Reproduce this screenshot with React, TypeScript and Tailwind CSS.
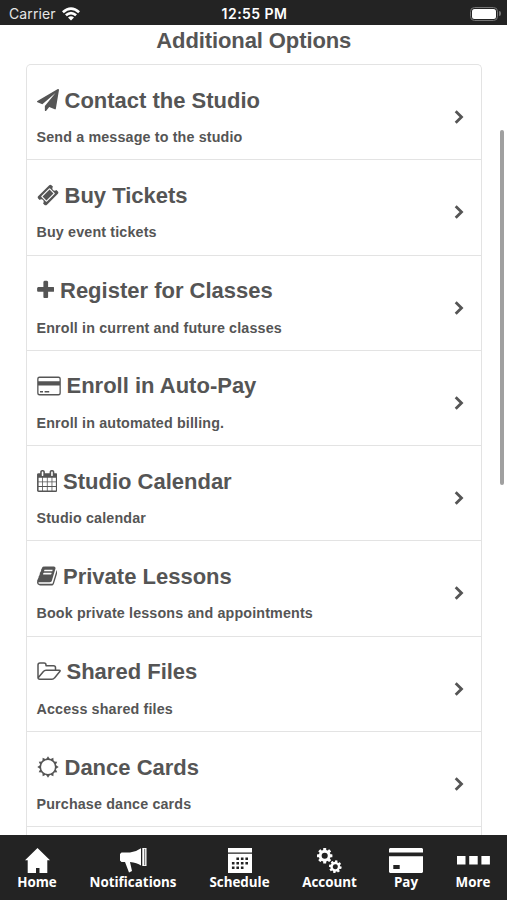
import type { ReactNode } from "react";

const PaperPlane = () => (
  <svg viewBox="0 0 1792 1792" className="block size-[22px] shrink-0 fill-current">
    <path d="M1764 11q33 24 27 64l-256 1536q-5 29-32 45-14 8-31 8-11 0-24-5l-453-185-242 295q-18 23-49 23-13 0-22-4-19-7-30.5-23.5t-11.500-36.500v-349l864-1059-1069 925-395-162q-37-14-40-55-2-40 32-59l1664-960q15-9 32-9 20 0 36 11z" />
  </svg>
);
const Ticket = () => (
  <svg viewBox="0 0 1792 1792" className="block size-[22px] shrink-0 fill-current">
    <path d="M1024 452l316 316-572 572-316-316zm-211 979l618-618q19-19 19-45t-19-45l-362-362q-18-18-45-18t-45 18l-618 618q-19 19-19 45t19 45l362 362q18 18 45 18t45-18zm889-637l-907 908q-37 37-90.500 37t-90.500-37l-126-125q56-56 56-136t-56-136-136-56-136 56l-125-126q-37-37-37-90.500t37-90.500l907-906q37-37 90.500-37t90.500 37l125 125q-56 56-56 136t56 136 136 56 136-56l126 125q37 37 37 90.500t-37 90.500z" />
  </svg>
);
const Plus = () => (
  <svg viewBox="192 64 1408 1792" className="block h-[22px] w-[17.500px] shrink-0 fill-current">
    <path d="M1600 736v192q0 40-28 68t-68 28h-416v416q0 40-28 68t-68 28h-192q-40 0-68-28t-28-68v-416h-416q-40 0-68-28t-28-68v-192q0-40 28-68t68-28h416v-416q0-40 28-68t68-28h192q40 0 68 28t28 68v416h416q40 0 68 28t28 68z" />
  </svg>
);
const Card = () => (
  <svg viewBox="0 0 24 22" className="block h-[22px] w-6 shrink-0 fill-current">
    <path fillRule="evenodd" d="M2.500 1.500h19a2.300 2.300 0 0 1 2.300 2.300v14.400a2.300 2.300 0 0 1-2.300 2.300h-19A2.300 2.300 0 0 1 .2 18.200V3.800A2.300 2.300 0 0 1 2.500 1.500zm0 1.400a1 1 0 0 0-1 1v2.300h21V3.900a1 1 0 0 0-1-1zm-1 7.500v7.700a1 1 0 0 0 1 1h19a1 1 0 0 0 1-1v-7.700zM3 16h3v1.500H3zm4.600 0h4.600v1.500H7.600z" />
  </svg>
);
const Calendar = () => (
  <svg viewBox="64 0 1664 1792" className="block h-[22px] w-[20.500px] shrink-0 fill-current">
    <path d="M192 1664h288v-288h-288v288zm352 0h320v-288h-320v288zm-352-352h288v-320h-288v320zm352 0h320v-320h-320v320zm-352-384h288v-288h-288v288zm736 736h320v-288h-320v288zm-384-736h320v-288h-320v288zm768 736h288v-288h-288v288zm-384-352h320v-320h-320v320zm-352-864v-288q0-13-9.500-22.500t-22.500-9.500h-64q-13 0-22.500 9.500t-9.500 22.500v288q0 13 9.500 22.500t22.500 9.500h64q13 0 22.500-9.500t9.500-22.500zm736 864h288v-320h-288v320zm-384-384h320v-288h-320v288zm384 0h288v-288h-288v288zm32-480v-288q0-13-9.500-22.500t-22.500-9.500h-64q-13 0-22.500 9.500t-9.500 22.500v288q0 13 9.500 22.500t22.500 9.500h64q13 0 22.500-9.500t9.500-22.500zm384-64v1280q0 52-38 90t-90 38h-1408q-52 0-90-38t-38-90v-1280q0-52 38-90t90-38h128v-96q0-66 47-113t113-47h64q66 0 113 47t47 113v96h384v-96q0-66 47-113t113-47h64q66 0 113 47t47 113v96h128q52 0 90 38t38 90z" />
  </svg>
);
const Book = () => (
  <svg viewBox="64 0 1664 1792" className="block h-[22px] w-[20.500px] shrink-0 fill-current">
    <path d="M1703 478q40 57 18 129l-275 906q-19 64-76.500 107.500t-122.500 43.500h-923q-77 0-148.500-53.500t-99.500-131.500q-24-67-2-127 0-4 3-27t4-37q1-8-3-21.500t-3-19.500q2-11 8-21t16.500-23.500 16.500-23.500q23-38 45-91.500t30-91.500q3-10 .5-30t-.5-28q3-11 17-28t17-23q21-36 42-92t25-90q1-9-2.500-32t.5-28q4-13 22-30.500t22-22.500q19-26 42.500-84.500t27.500-96.500q1-8-3-25.500t-2-26.500q2-8 9-18t18-23 17-21q8-12 16.500-30.500t15-35 16-36 19.500-32 26.500-23.500 36-11.500 47.500 5.500l-1 3q38-9 51-9h761q74 0 114 56t18 130l-274 906q-36 119-71.500 153.500t-128.500 34.500h-869q-27 0-38 15-11 16-1 43 24 70 144 70h923q29 0 56-15.500t35-41.500l300-987q7-22 5-57 38 15 59 43zm-1064 2q-4 13 2 22.500t20 9.500h608q13 0 25.500-9.500t16.500-22.500l21-64q4-13-2-22.500t-20-9.500h-608q-13 0-25.500 9.500t-16.500 22.500zm-83 256q-4 13 2 22.500t20 9.500h608q13 0 25.500-9.500t16.500-22.500l21-64q4-13-2-22.500t-20-9.500h-608q-13 0-25.500 9.500t-16.500 22.500z" />
  </svg>
);
const FolderOpen = () => (
  <svg viewBox="0 0 24 22" className="block h-[22px] w-6 shrink-0 fill-none stroke-current" strokeWidth="1.500" strokeLinejoin="round">
    <path d="M1 17V4a2 2 0 0 1 2-2h4a2 2 0 0 1 2 2v.8h7.500a2 2 0 0 1 2 2v2.400M1 17l5.200-6.300q1.200-1.400 2.800-1.400h13.200q1.500 0 .6 1.300l-5.300 6.300q-1 1.300-2.500 1.300H2.800Q1 18.200 1 16.500" />
  </svg>
);
const rays = Array.from({ length: 12 }, (_, i) => i * 30);
const Sun = () => (
  <svg viewBox="-11 -11 22 22" className="block size-[22px] shrink-0 fill-current">
    <circle r="7.700" fill="none" stroke="currentColor" strokeWidth="1.500" />
    {rays.map((a) => (
      <path key={a} d="M-2-7.700L0-10.700L2-7.700z" transform={`rotate(${a})`} />
    ))}
  </svg>
);

type Option = { icon: ReactNode; title: string; detail: string };
const options: Option[] = [
  { icon: <PaperPlane />, title: "Contact the Studio", detail: "Send a message to the studio" },
  { icon: <Ticket />, title: "Buy Tickets", detail: "Buy event tickets" },
  { icon: <Plus />, title: "Register for Classes", detail: "Enroll in current and future classes" },
  { icon: <Card />, title: "Enroll in Auto-Pay", detail: "Enroll in automated billing." },
  { icon: <Calendar />, title: "Studio Calendar", detail: "Studio calendar" },
  { icon: <Book />, title: "Private Lessons", detail: "Book private lessons and appointments" },
  { icon: <FolderOpen />, title: "Shared Files", detail: "Access shared files" },
  { icon: <Sun />, title: "Dance Cards", detail: "Purchase dance cards" },
];

function Row({ icon, title, detail }: Option) {
  return (
    <li className="flex h-[95.300px] shrink-0 items-start justify-between border-b-[1.500px] border-[#e3e3e3] pr-[17px] pl-[10px]">
      <div className="pt-5">
        <h2 className="flex h-[30px] items-center gap-[6px] text-[22px] leading-[30px] font-bold whitespace-nowrap">
          {icon}
          <span className="pt-px">{title}</span>
        </h2>
        <p className="mt-[12px] text-[14.300px] leading-5 font-bold tracking-[0.150px] whitespace-nowrap">{detail}</p>
      </div>
      <svg viewBox="0 0 10 16" className="mt-[44px] h-4 w-[10px] fill-none stroke-current" strokeWidth="2.800">
        <path d="M1.700 2.300L7.500 8L1.700 13.700" />
      </svg>
    </li>
  );
}

const Home = () => (
  <svg viewBox="0 0 25 25" className="block size-[25px] fill-current">
    <path d="M12.500 0L25 12.300H22.300V25H14.500V20H11V25H2.700V12.300H0z" />
  </svg>
);
const Megaphone = () => (
  <svg viewBox="0 0 27 25" className="block h-[25px] w-[27px] fill-current">
    <path d="M1.500 4.500H10Q16 4 21 .3V17.500Q17 14.500 10 14L12 23L9 24.500L5 14H1.500L0 12.500V6zM22.300 0H26.500V18H22.300z" />
    <path d="M24.700 .8V17.200" stroke="#232323" strokeWidth=".7" />
  </svg>
);
const Schedule = () => (
  <svg viewBox="0 0 24 25" className="block h-[25px] w-6 fill-current">
    <path fillRule="evenodd" d="M0 0H24V4.500H0zM0 5.800H24V25H0zM8.400 9.500v2.600h2.600V9.500zM12.900 9.500v2.600h2.600V9.500zM17.400 9.500v2.600H20V9.500zM3.900 14v2.600h2.600V14zM8.400 14v2.600h2.600V14zM12.900 14v2.600h2.600V14zM17.400 14v2.600H20V14zM3.900 18.500v2.600h2.600v-2.600zM8.400 18.500v2.600h2.600v-2.600zM12.900 18.500v2.600h2.600v-2.600z" />
  </svg>
);
const teeth = [0, 45, 90, 135, 180, 225, 270, 315];
const Gears = () => (
  <svg viewBox="0 0 25 25" className="block size-[25px] fill-current">
    <g transform="translate(7.700 7.700)">
      <circle r="4.500" fill="none" stroke="currentColor" strokeWidth="2.900" />
      {teeth.map((a) => <rect key={a} x="-1.500" y="-7.700" width="3" height="3" rx=".5" transform={`rotate(${a})`} />)}
    </g>
    <g transform="translate(18.300 18.700) rotate(10) scale(.82)">
      <circle r="4.500" fill="none" stroke="currentColor" strokeWidth="2.900" />
      {teeth.map((a) => <rect key={a} x="-1.500" y="-7.700" width="3" height="3" rx=".5" transform={`rotate(${a})`} />)}
    </g>
  </svg>
);
const Pay = () => (
  <svg viewBox="0 0 34 25" className="block h-[25px] w-[34px] fill-current">
    <path fillRule="evenodd" d="M1 0H33L34 1V4.500H0V1zM0 8.300H34V24L33 25H1L0 24zM4.300 17v4h6.400v-4z" />
  </svg>
);
const More = () => (
  <svg viewBox="0 0 33 25" className="block h-[25px] w-[33px] fill-current">
    <path d="M0 8H8.500V16.500H0zM12.200 8H20.700V16.500H12.200zM24.400 8H32.900V16.500H24.400z" />
  </svg>
);

const tabs = [
  { label: "Home", icon: <Home />, width: "w-[74px]" },
  { label: "Notifications", icon: <Megaphone />, width: "w-[118px]" },
  { label: "Schedule", icon: <Schedule />, width: "w-[95px]" },
  { label: "Account", icon: <Gears />, width: "w-[85px]" },
  { label: "Pay", icon: <Pay />, width: "w-[68px]" },
  { label: "More", icon: <More />, width: "w-[66px]" },
];

export default function App() {
  return (
    <div className="flex h-[900px] w-[507px] flex-col overflow-hidden bg-white font-['Liberation_Sans',Arial,sans-serif] text-[#555555]">
      <header className="grid h-[25px] shrink-0 grid-cols-3 items-center bg-[#232323] pt-[2px] pr-[6px] pl-[9px] font-[Inter,sans-serif] text-[14px] leading-5 text-[#e6e6e6]">
        <div className="flex items-center gap-[6px]">
          <span className="tracking-[0.1px]">Carrier</span>
          <svg viewBox="0 0 18 14" className="block h-[14px] w-[18px] fill-white">
            <path d="M0 4.200Q9-3.800 18 4.200L16.200 6.200Q9-.2 1.800 6.200zM3 7.300Q9 2 15 7.300L13.200 9.300Q9 5.700 4.800 9.300zM6 10.400Q9 8 12 10.400L9 13.600z" />
          </svg>
        </div>
        <span className="-ml-px text-center text-[14px] font-semibold tracking-[0.450px] whitespace-nowrap text-white">12:55 PM</span>
        <div className="flex items-center justify-end">
          <div className="h-[14px] w-[28px] rounded-[4.500px] border-[1.500px] border-[#757575] p-[1px]">
            <div className="h-full rounded-[2.500px] bg-white" />
          </div>
          <div className="ml-px h-[5px] w-[2px] rounded-r-full bg-[#757575]" />
        </div>
      </header>
      <main className="flex min-h-0 flex-1 justify-between overflow-hidden pl-[25.500px]">
        <div className="w-[456.500px]">
          <h1 className="h-[39px] pt-px text-center text-[22px] leading-[30px] font-bold tracking-[-0.100px]">Additional Options</h1>
          <ul className="flex flex-col rounded-t-[5px] border-[1.500px] border-b-0 border-[#e3e3e3]">
            {options.map((option) => <Row key={option.title} {...option} />)}
            <li className="h-[95px] shrink-0" />
          </ul>
        </div>
        <div className="mt-[105px] mr-[3px] h-[355px] w-[4px] rounded-full bg-[#a0a0a0]" />
      </main>
      <nav className="flex h-[65px] shrink-0 bg-[#232323] pt-[13px] font-['Open_Sans',sans-serif] text-[13.400px] leading-[18px] font-bold text-white">
        {tabs.map(({ label, icon, width }) => (
          <div key={label} className={`flex shrink-0 flex-col items-center ${width}`}>
            {icon}
            <span className="whitespace-nowrap">{label}</span>
          </div>
        ))}
      </nav>
    </div>
  );
}
